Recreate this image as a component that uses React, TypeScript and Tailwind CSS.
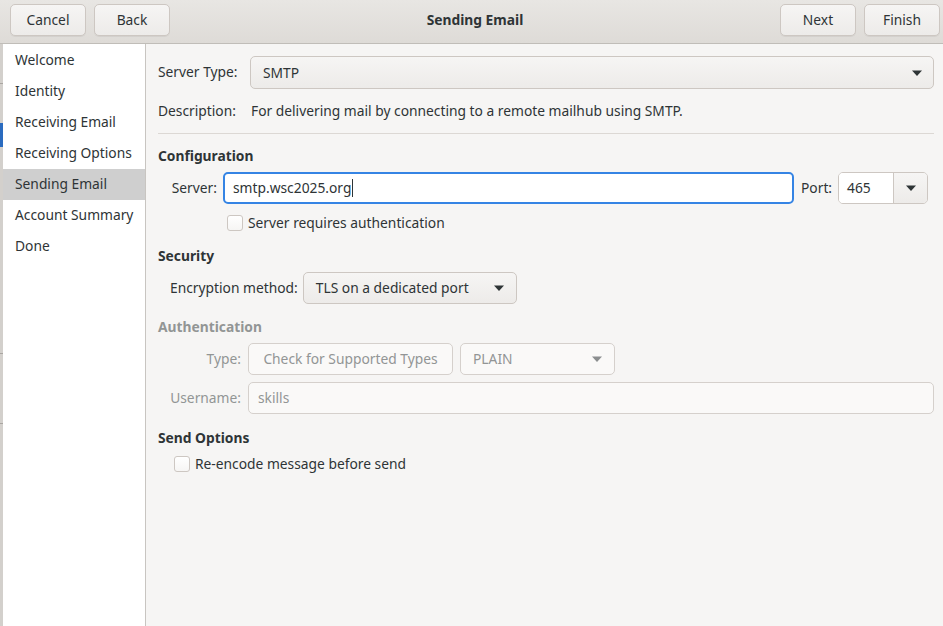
import React from "react";

const font = { fontFamily: '"Noto Sans", "Open Sans", sans-serif' };

function Arrow({ disabled }: { disabled?: boolean }) {
  return (
    <svg width="12" height="7" viewBox="0 0 12 7" className="shrink-0">
      <path d="M1 0.5h10L6 6z" fill={disabled ? "#8b8e8f" : "#2e3436"} />
    </svg>
  );
}

function HeaderButton({ label }: { label: string }) {
  return (
    <button className="h-[32px] w-[76px] rounded-[5px] border border-[#cdc7c2] bg-gradient-to-b from-[#f6f5f4] to-[#edebe9] text-[#2e3436] shadow-[0_1px_0_rgba(0,0,0,0.05)]">
      {label}
    </button>
  );
}

function Checkbox() {
  return (
    <span className="inline-block h-[16px] w-[16px] shrink-0 rounded-[3px] border border-[#cdc7c2] bg-gradient-to-b from-[#ffffff] to-[#f6f5f4]" />
  );
}

const steps = [
  "Welcome",
  "Identity",
  "Receiving Email",
  "Receiving Options",
  "Sending Email",
  "Account Summary",
  "Done",
];

export default function App() {
  return (
    <div
      className="flex h-[626px] w-[943px] flex-col overflow-hidden bg-[#f6f5f4] text-[13.8px] text-[#2e3436]"
      style={font}
    >
      {/* header bar */}
      <div className="flex h-[44px] shrink-0 items-start border-b border-[#c0bdb8] bg-gradient-to-b from-[#e8e6e3] to-[#dedbd7] pt-[4px]">
        <div className="flex gap-[8px] pl-[10px]">
          <HeaderButton label="Cancel" />
          <HeaderButton label="Back" />
        </div>
        <div className="flex h-[32px] flex-1 items-center justify-center font-bold">Sending Email</div>
        <div className="flex gap-[8px] pr-[3px]">
          <HeaderButton label="Next" />
          <HeaderButton label="Finish" />
        </div>
      </div>

      <div className="flex min-h-0 flex-1">
        {/* background window edge */}
        <div className="flex w-[3px] shrink-0 flex-col bg-[#d3d0cc]">
          <div className="h-[39px]" />
          <div className="h-[1px] bg-[#a9a6a2]" />
          <div className="h-[39px]" />
          <div className="h-[24px] bg-[#2a6bbf]" />
          <div className="h-[206px]" />
          <div className="h-[1px] bg-[#a9a6a2]" />
          <div className="h-[69px]" />
          <div className="h-[1px] bg-[#a9a6a2]" />
        </div>

        {/* sidebar */}
        <div className="w-[143px] shrink-0 border-r border-[#c8c5c1] bg-white pt-[1px]">
          {steps.map((s) => (
            <div
              key={s}
              className={`flex h-[31px] items-center pl-[12px] ${s === "Sending Email" ? "bg-[#cfcfcf]" : ""}`}
            >
              {s}
            </div>
          ))}
        </div>

        {/* content */}
        <div className="flex min-w-0 flex-1 flex-col pl-[12px] pr-[9px] pt-[12px]">
          <div className="flex items-center">
            <div className="w-[92px] shrink-0">Server Type:</div>
            <div className="flex h-[33px] flex-1 items-center justify-between rounded-[5px] border border-[#cdc7c2] bg-gradient-to-b from-[#f6f5f4] to-[#edebe9] pl-[12px] pr-[10px] pt-[1px]">
              <span>SMTP</span>
              <Arrow />
            </div>
          </div>

          <div className="mt-[12px] flex h-[20px] items-center pt-[1px]">
            <div className="w-[93px] shrink-0">Description:</div>
            <div>For delivering mail by connecting to a remote mailhub using SMTP.</div>
          </div>

          <div className="mt-[12px] h-[1px] bg-[#dcd8d4]" />

          <div className="mt-[12px] flex h-[20px] items-center font-bold">Configuration</div>

          <div className="mt-[6px] flex items-center pl-[12px]">
            <div className="w-[47px] shrink-0 text-right">Server:</div>
            <div className="ml-[6px] flex h-[32px] w-[571px] items-center rounded-[5px] border-2 border-[#3584e4] bg-white pl-[8px]">
              <span>smtp.wsc2025.org</span>
              <span className="ml-[1px] inline-block h-[18px] w-[1px] bg-[#2e3436]" />
            </div>
            <div className="ml-[7px]">Port:</div>
            <div className="ml-[6px] flex h-[32px] w-[90px] overflow-hidden rounded-[5px] border border-[#cdc7c2]">
              <div className="flex w-[54px] items-center bg-white pl-[8px]">465</div>
              <div className="flex flex-1 items-center justify-center border-l border-[#cdc7c2] bg-gradient-to-b from-[#f6f5f4] to-[#edebe9]">
                <Arrow />
              </div>
            </div>
          </div>

          <div className="mt-[9px] flex h-[20px] items-center gap-[5px] pl-[69px]">
            <Checkbox />
            <span>Server requires authentication</span>
          </div>

          <div className="mt-[13px] flex h-[20px] items-center font-bold">Security</div>

          <div className="mt-[6px] flex items-center pl-[12px]">
            <div className="shrink-0">Encryption method:</div>
            <div className="ml-[5px] flex h-[32px] w-[214px] items-center justify-between rounded-[5px] border border-[#cdc7c2] bg-gradient-to-b from-[#f6f5f4] to-[#edebe9] pl-[12px] pr-[11px]">
              <span>TLS on a dedicated port</span>
              <Arrow />
            </div>
          </div>

          <div className="mt-[13px] flex h-[20px] items-center font-bold text-[#929595]">Authentication</div>

          <div className="mt-[6px] flex items-center pl-[12px] text-[#929595]">
            <div className="w-[71px] shrink-0 text-right">Type:</div>
            <div className="ml-[7px] flex h-[32px] w-[205px] items-center justify-center rounded-[5px] border border-[#d5d0cc] bg-[#faf9f8]">
              Check for Supported Types
            </div>
            <div className="ml-[7px] flex h-[32px] w-[155px] items-center justify-between rounded-[5px] border border-[#d5d0cc] bg-[#faf9f8] pl-[12px] pr-[11px]">
              <span>PLAIN</span>
              <Arrow disabled />
            </div>
          </div>

          <div className="mt-[7px] flex items-center pl-[12px] text-[#929595]">
            <div className="w-[71px] shrink-0 text-right">Username:</div>
            <div className="ml-[7px] flex h-[32px] flex-1 items-center rounded-[5px] border border-[#d5d0cc] bg-[#faf9f8] pl-[9px]">
              skills
            </div>
          </div>

          <div className="mt-[14px] flex h-[20px] items-center font-bold">Send Options</div>

          <div className="mt-[6px] flex h-[20px] items-center gap-[5px] pl-[16px]">
            <Checkbox />
            <span>Re-encode message before send</span>
          </div>
        </div>
      </div>
    </div>
  );
}
